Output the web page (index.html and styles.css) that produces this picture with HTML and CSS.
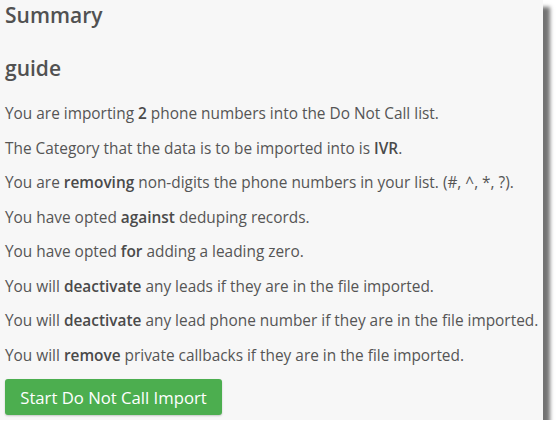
FILE: index.html
```html
<!DOCTYPE html>
<html lang="en">
<head>
    <meta charset="UTF-8">
    <title>Summary</title>
    <link rel="stylesheet" href="styles.css">
</head>
<body>
    <div class="summary-panel">
        <h3 class="summary-title">Summary</h3>
        <h3 class="summary-title guide-title">guide</h3>

        <p>You are importing <b>2</b> phone numbers into the Do Not Call list.</p>
        <p>The Category that the data is to be imported into is <b>IVR</b>.</p>
        <p>You are <b>removing</b> non-digits the phone numbers in your list. (#, ^, *, ?).</p>
        <p>You have opted <b>against</b> deduping records.</p>
        <p>You have opted <b>for</b> adding a leading zero.</p>
        <p>You will <b>deactivate</b> any leads if they are in the file imported.</p>
        <p>You will <b>deactivate</b> any lead phone number if they are in the file imported.</p>
        <p>You will <b>remove</b> private callbacks if they are in the file imported.</p>

        <button class="btn-import">Start Do Not Call Import</button>
    </div>
</body>
</html>
```

FILE: styles.css
```css
body {
    margin: 0;
    background: #fff;
    font-family: 'Open Sans', 'Liberation Sans', sans-serif;
    color: #555;
}

.summary-panel {
    width: 538px;
    height: 420px;
    padding-left: 5px;
    background: #f7f7f7;
    box-shadow: 7px 7px 4px rgba(0, 0, 0, 0.55);
    overflow: hidden;
}

.summary-title {
    font-size: 21px;
    font-weight: 600;
    color: #515151;
    margin: 0;
    line-height: 30px;
}

.guide-title {
    margin-top: 23px;
    margin-bottom: 20px;
}

p {
    font-size: 15.4px;
    line-height: 21px;
    margin: 0 0 13.5px;
}

b {
    font-weight: 600;
    color: #4a4a4a;
}

.btn-import {
    display: block;
    margin-top: 0;
    background: #4cae4f;
    color: #fff;
    border: none;
    border-radius: 3px;
    font-family: inherit;
    font-size: 16.7px;
    white-space: nowrap;
    padding: 0 10px;
    height: 36px;
    width: 217px;
    box-shadow: 0 1px 2px rgba(0, 0, 0, 0.2);
}
```
